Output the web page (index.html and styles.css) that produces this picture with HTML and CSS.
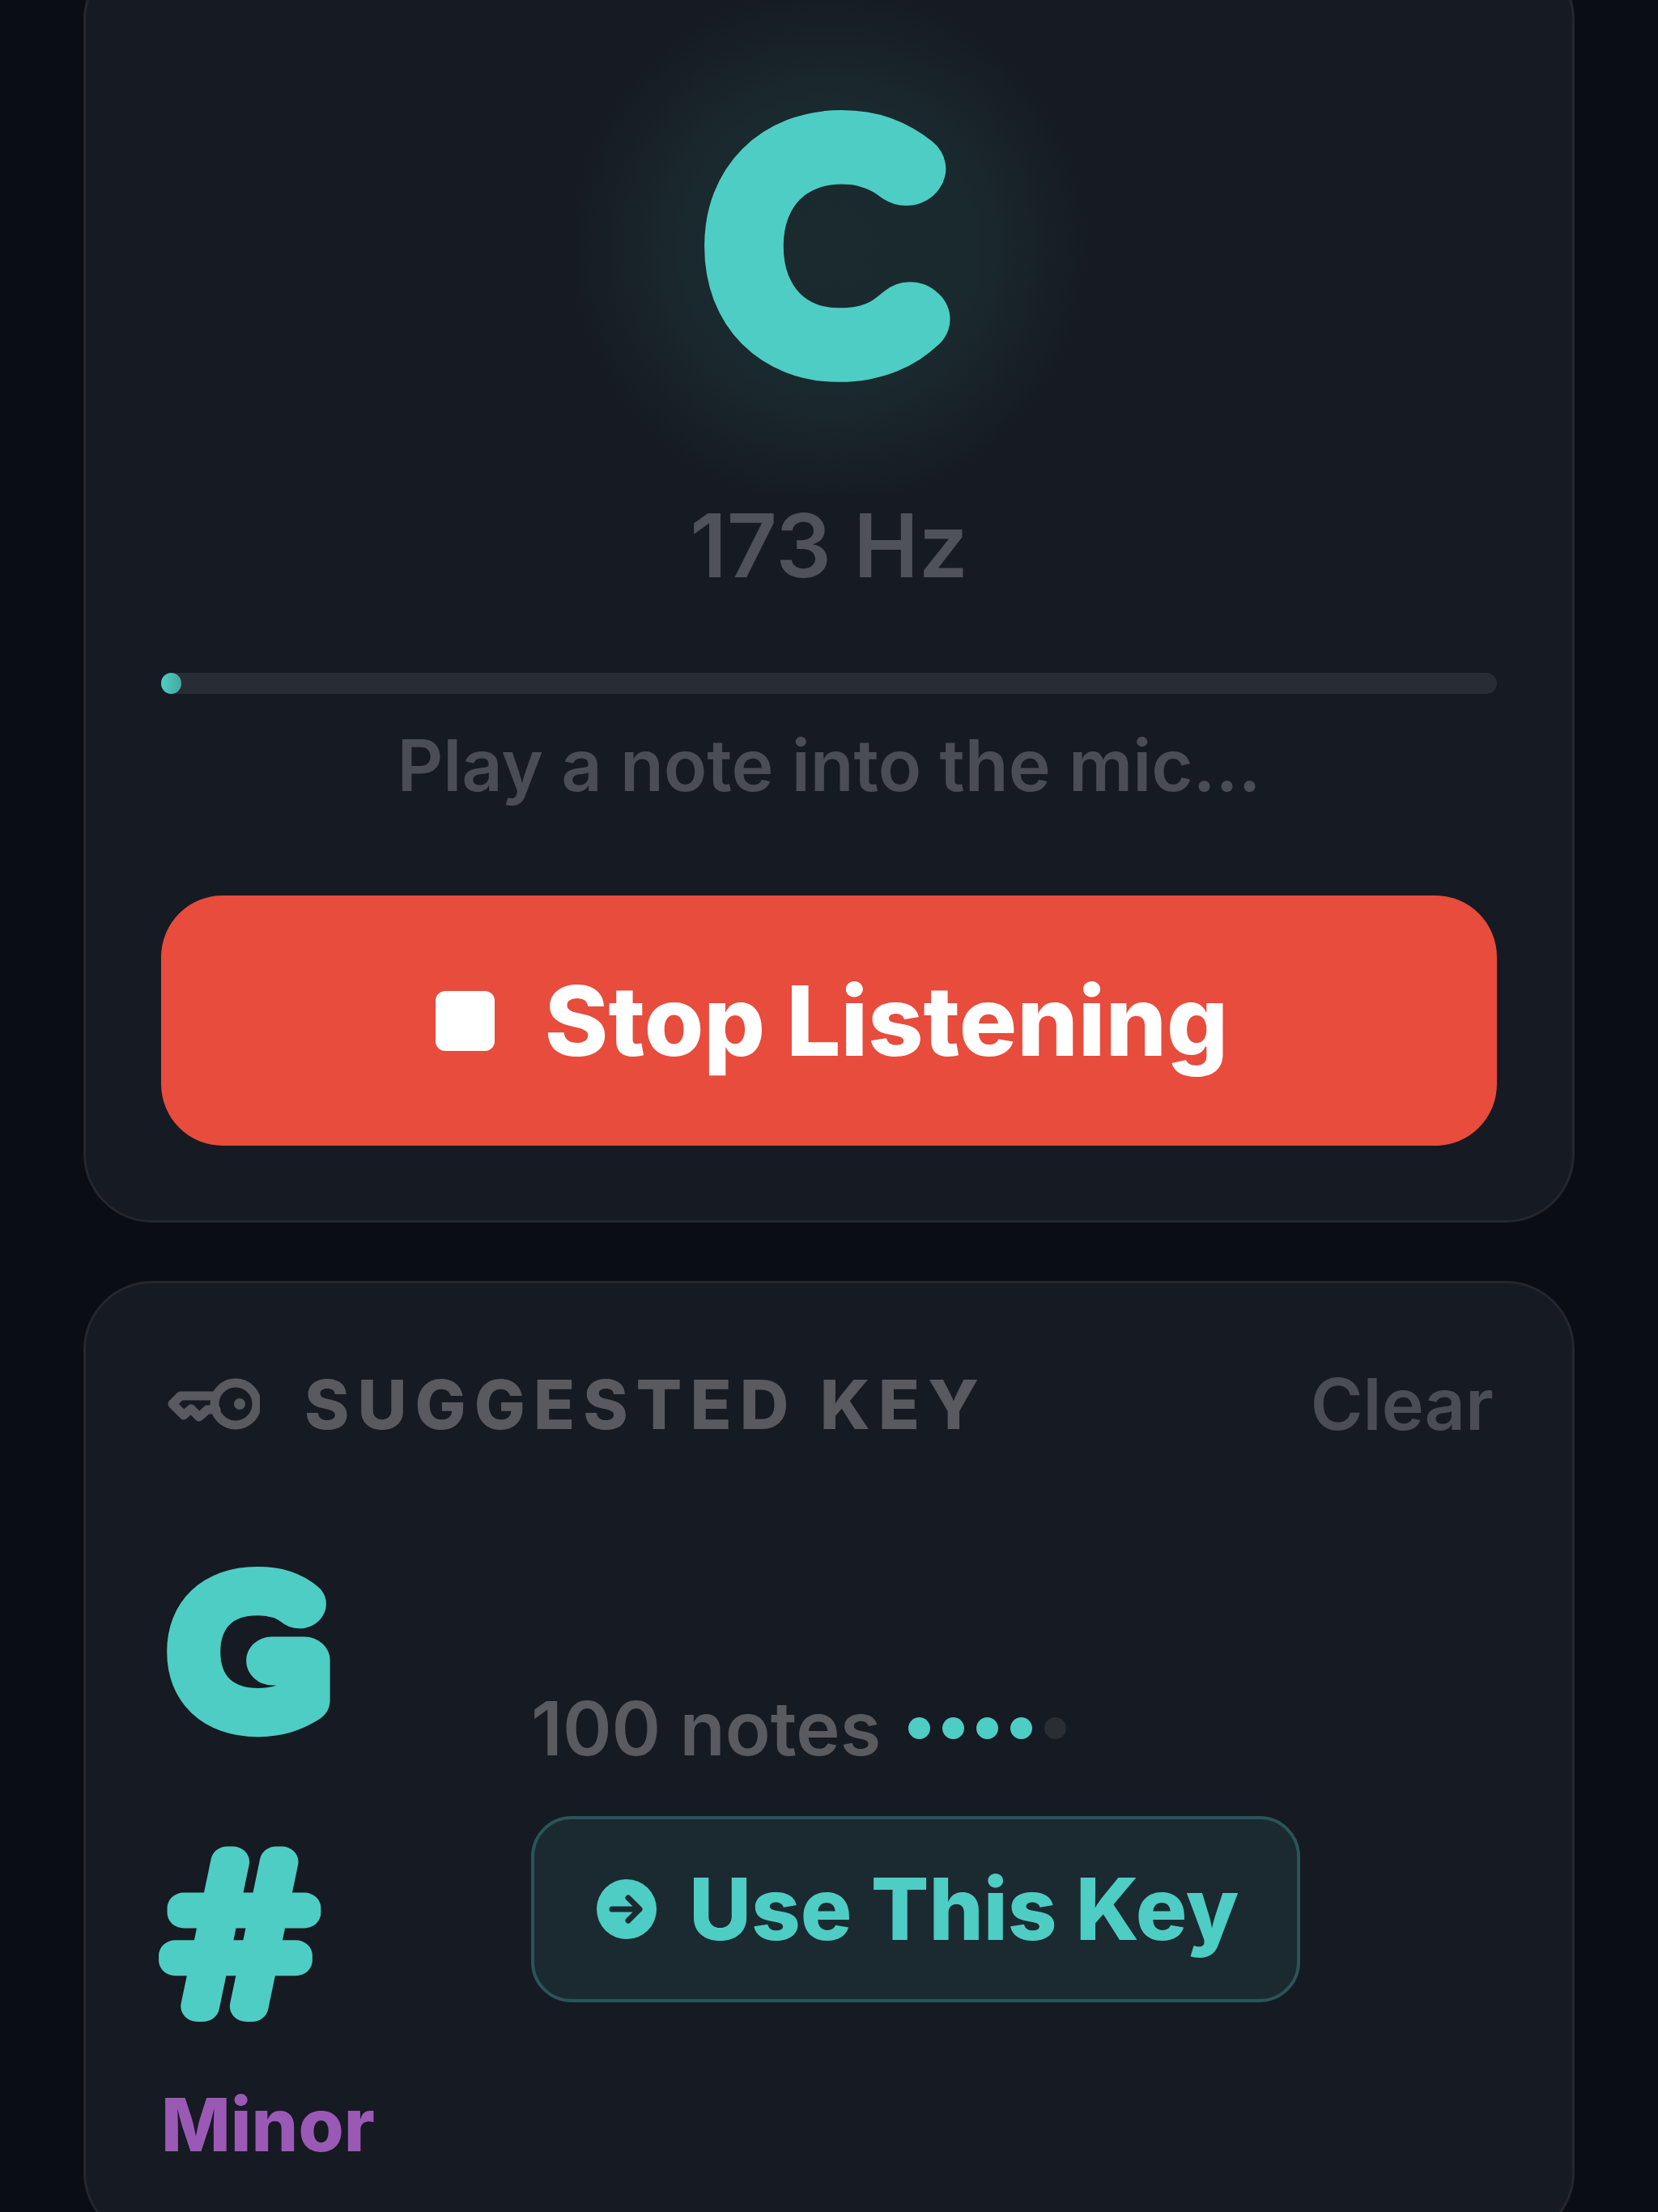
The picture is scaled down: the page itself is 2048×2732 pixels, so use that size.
FILE: index.html
```html
<!DOCTYPE html>
<html lang="en">
<head>
    <meta charset="UTF-8">
    <meta name="viewport" content="width=device-width, initial-scale=1.0">
    <title>Tuner</title>
    <link rel="stylesheet" href="styles.css">
</head>
<body>
    <main class="screen">
        <!-- Tuner card -->
        <section class="card tuner">
            <div class="note-stage">
                <svg class="note-svg" width="500" height="610" viewBox="0 0 500 610">
                    <text class="glyph note-glyph" transform="translate(243 482) scale(1.06 1)">C</text>
                </svg>
            </div>
            <div class="freq">173 Hz</div>
            <div class="track"><div class="thumb"></div></div>
            <p class="hint">Play a note into the mic...</p>
            <button class="stop-btn">
                <span class="stop-icon"></span>
                <span>Stop Listening</span>
            </button>
        </section>

        <!-- Suggested key card -->
        <section class="card key-card">
            <div class="key-head">
                <div class="key-title">
                    <svg class="key-icon" width="114" height="64" viewBox="0 0 114 64" fill="none" stroke="#595a60" stroke-width="11" stroke-linejoin="round" stroke-linecap="round">
                        <circle cx="84" cy="32" r="26"/>
                        <path d="M59 22H16L6 32L20 46L29 38L39 48L49 39H60"/>
                        <circle cx="89" cy="32" r="7" fill="#595a60" stroke="none"/>
                    </svg>
                    <span>SUGGESTED KEY</span>
                </div>
                <span class="clear">Clear</span>
            </div>
            <div class="key-body">
                <div class="key-name">
                    <svg class="key-svg" width="230" height="250" viewBox="0 0 230 250">
                        <text class="glyph key-letter" transform="translate(23 204) scale(1.09 1)">G</text>
                    </svg>
                    <svg class="key-svg" width="230" height="250" viewBox="0 0 230 250">
                        <text class="glyph key-sharp" transform="translate(10 221) scale(1.08 1)">#</text>
                    </svg>
                    <div class="mode">Minor</div>
                </div>
                <div class="key-info">
                    <div class="confidence">
                        <span>100 notes</span>
                        <div class="dots">
                            <i class="dot on"></i>
                            <i class="dot on"></i>
                            <i class="dot on"></i>
                            <i class="dot on"></i>
                            <i class="dot"></i>
                        </div>
                    </div>
                    <button class="use-btn">
                        <svg width="74" height="76" viewBox="0 0 74 76">
                            <circle cx="37" cy="38" r="37" fill="#4ecdc4"/>
                            <path d="M19 38H53M39 24L53 38L39 52" fill="none" stroke="#1a2a30" stroke-width="7" stroke-linecap="round" stroke-linejoin="round"/>
                        </svg>
                        <span>Use This Key</span>
                    </button>
                </div>
            </div>
        </section>
    </main>
</body>
</html>
```

FILE: styles.css
```css
* {
    box-sizing: border-box;
}
html, body {
    margin: 0;
    padding: 0;
    height: 2732px;
    overflow: hidden;
}
body {
    background: #0a0d14;
    font-family: 'Inter', 'Liberation Sans', sans-serif;
}
.screen {
    display: flex;
    flex-direction: column;
    gap: 72px;
    padding: 0 103px;
    margin-top: -60px;
}
.card {
    background-color: #161a22;
    border: 3px solid #24272e;
    border-radius: 85px;
    padding: 0 93px;
}

/* Big rounded letters: thin glyph with a fat round stroke */
.glyph {
    fill: #4ecdc4;
    stroke: #4ecdc4;
    stroke-linejoin: round;
}

/* Tuner */
.tuner {
    height: 1570px;
}
.note-stage {
    height: 666px;
    display: flex;
    justify-content: center;
    background: radial-gradient(circle 330px at 50% 362px, #1a2a2e 0%, #1a292e 55%, rgba(26, 40, 45, 0) 100%);
}
.note-glyph {
    font-family: 'Lato', sans-serif;
    font-size: 346px;
    font-weight: 100;
    text-anchor: middle;
    stroke-width: 88px;
}
.freq {
    font-size: 108px;
    line-height: 130px;
    font-weight: 600;
    color: #4f525a;
    text-align: center;
}
.track {
    height: 26px;
    margin-top: 92px;
    background-color: #282c34;
    border-radius: 13px;
}
.thumb {
    width: 25px;
    height: 26px;
    border-radius: 50%;
    background: linear-gradient(90deg, #4ecdc4, #45a89f);
}
.hint {
    margin: 35px 0 0;
    font-size: 88px;
    line-height: 106px;
    font-weight: 600;
    color: #4a4d55;
    text-align: center;
}
.stop-btn {
    width: 100%;
    height: 309px;
    margin-top: 108px;
    padding: 0 0 0 7px;
    display: flex;
    align-items: center;
    justify-content: center;
    gap: 62px;
    border: none;
    border-radius: 76px;
    background-color: #e74c3c;
    color: #fff;
    font-family: inherit;
    font-size: 119px;
    font-weight: 800;
}
.stop-icon {
    width: 73px;
    height: 74px;
    border-radius: 12px;
    background-color: #fff;
}

/* Suggested key */
.key-card {
    height: 1186px;
}
.key-head {
    display: flex;
    align-items: center;
    justify-content: space-between;
    margin-top: 96px;
}
.key-title {
    display: flex;
    align-items: center;
    gap: 55px;
    margin-left: 8px;
    font-size: 84px;
    font-weight: 800;
    letter-spacing: 10px;
    color: #595a60;
}
.clear {
    margin-right: 4px;
    font-size: 88px;
    font-weight: 600;
    color: #4a4d55;
}
.key-body {
    display: flex;
    align-items: center;
    gap: 190px;
    margin-top: 124px;
}
.key-name {
    display: flex;
    flex-direction: column;
    width: 267px;
}
.key-svg {
    display: block;
    overflow: visible;
}
.key-svg + .key-svg {
    margin-top: 96px;
}
.key-letter {
    font-family: 'Lato', sans-serif;
    font-size: 212px;
    font-weight: 100;
    stroke-width: 58px;
}
.key-sharp {
    font-family: 'Noto Sans', sans-serif;
    font-size: 250px;
    font-weight: 100;
    stroke-width: 38px;
}
.mode {
    margin-top: 62px;
    font-size: 91px;
    font-weight: 800;
    color: #9b59b6;
}
.key-info {
    display: flex;
    flex-direction: column;
    align-items: flex-start;
    gap: 53px;
    margin-bottom: 39px;
}
.confidence {
    display: flex;
    align-items: center;
    gap: 34px;
    font-size: 92px;
    font-weight: 600;
    color: #5a5b60;
}
.dots {
    display: flex;
    gap: 15px;
}
.dot {
    width: 27px;
    height: 27px;
    border-radius: 50%;
    background-color: #2a2d34;
}
.dot.on {
    background-color: #4ecdc4;
}
.use-btn {
    display: flex;
    align-items: center;
    gap: 40px;
    width: 950px;
    height: 230px;
    padding: 0 0 0 77px;
    background-color: #1a2a30;
    border: 4px solid #2a5558;
    border-radius: 50px;
    color: #4ecdc4;
    font-family: inherit;
    font-size: 106px;
    font-weight: 800;
    white-space: nowrap;
}
```
